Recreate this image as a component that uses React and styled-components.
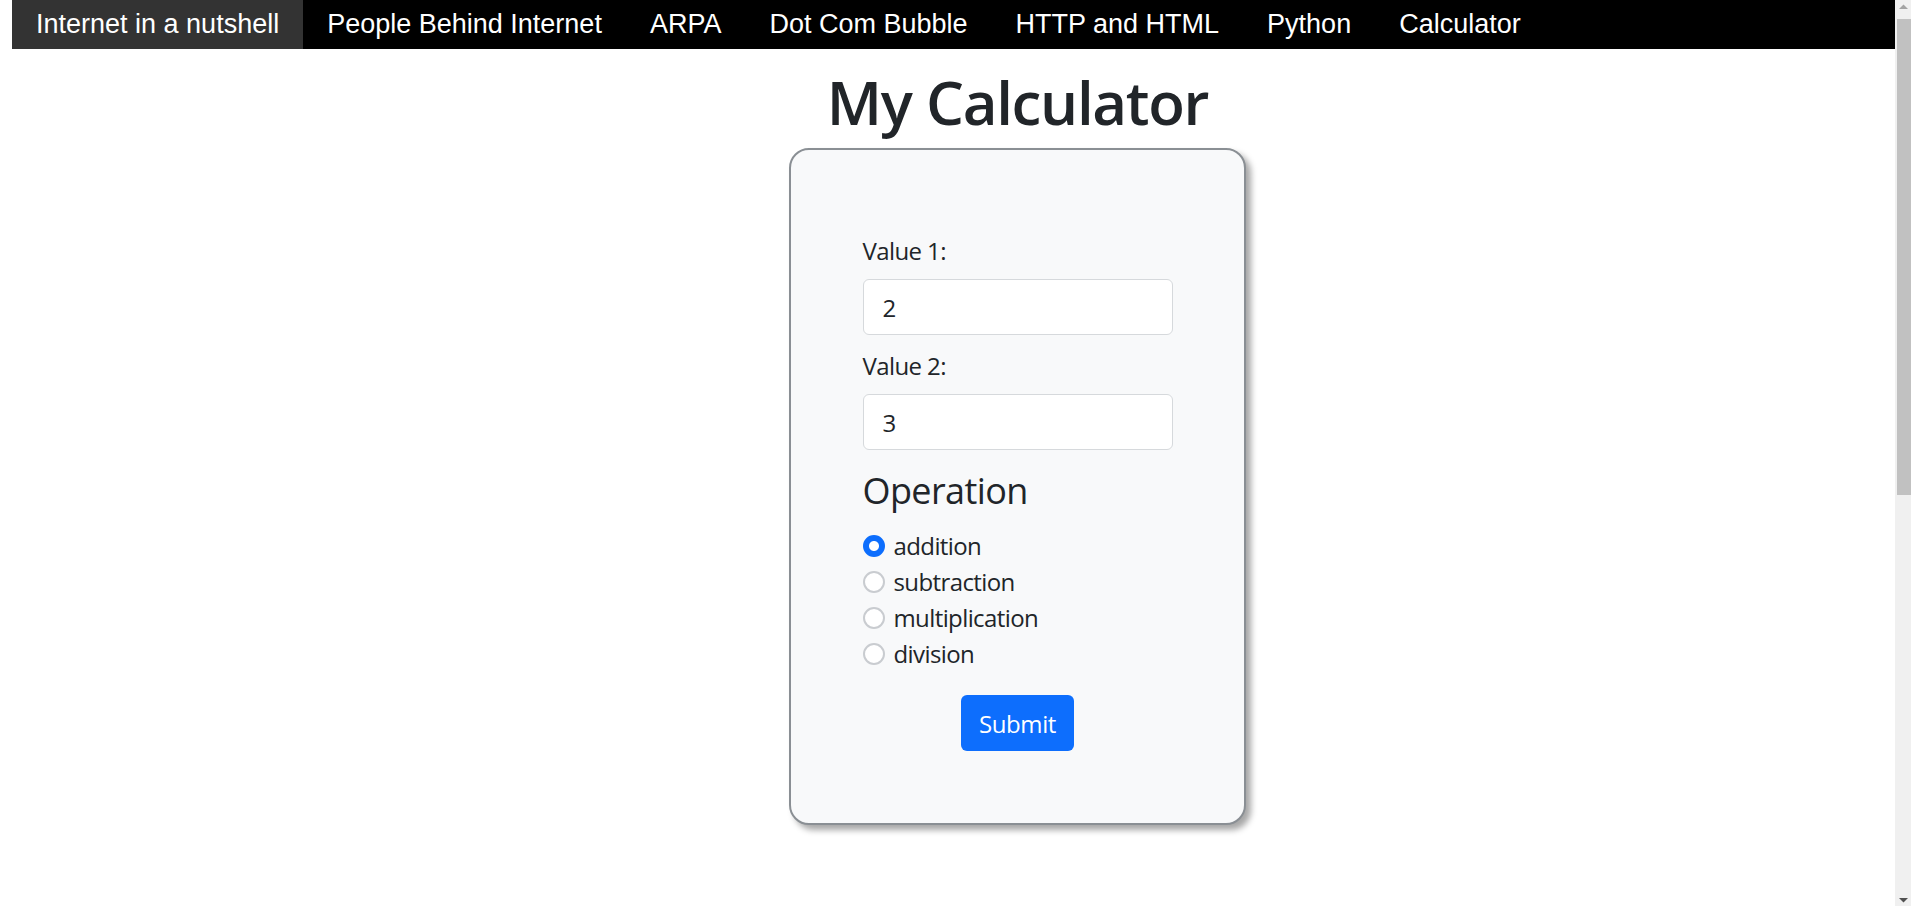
import React from 'react';
import styled, { createGlobalStyle } from 'styled-components';

const GlobalStyle = createGlobalStyle`
  body {
    margin: 0 16px 0 12px;
    background: #fff;
    color: #212529;
    font-family: "Open Sans", "Noto Sans", sans-serif;
    font-size: 24px;
    line-height: 1.5;
    letter-spacing: -0.6px;
  }
  * {
    box-sizing: border-box;
  }
`;

const links = [
  'Internet in a nutshell',
  'People Behind Internet',
  'ARPA',
  'Dot Com Bubble',
  'HTTP and HTML',
  'Python',
  'Calculator',
];

const operations = ['addition', 'subtraction', 'multiplication', 'division'];

const App = () => (
  <>
    <GlobalStyle />
    <NavBar>
      {links.map((name, i) => (
        <li key={name}>
          <NavLink href="#" $active={i === 0}>{name}</NavLink>
        </li>
      ))}
    </NavBar>

    <Page>
      <Title>My Calculator</Title>
      <Card>
        <Form onSubmit={e => e.preventDefault()}>
          <Label htmlFor="v1">Value 1:</Label>
          <Input id="v1" type="text" defaultValue="2" />
          <Label htmlFor="v2">Value 2:</Label>
          <Input id="v2" type="text" defaultValue="3" $last />

          <Heading>Operation</Heading>
          {operations.map((op, i) => (
            <RadioRow key={op}>
              <Radio type="radio" name="operation" value={op} defaultChecked={i === 0} />
              {op}
            </RadioRow>
          ))}

          <SubmitButton type="submit">Submit</SubmitButton>
        </Form>
      </Card>
    </Page>

    {/* window scrollbar, drawn since the headless page hides its own */}
    <Scrollbar>
      <Arrow viewBox="0 0 16 17">
        <path d="M4 9 L8.5 4.5 L13 9 Z" fill="#a3a3a3" />
      </Arrow>
      <Thumb />
      <Spacer />
      <Arrow viewBox="0 0 16 17">
        <path d="M4 9 L8.5 13.5 L13 9 Z" fill="#505050" />
      </Arrow>
    </Scrollbar>
  </>
);

//styled components

const NavBar = styled.ul`
  display: flex;
  margin: 0;
  padding: 0;
  list-style: none;
  height: 49px;
  background: #000;
  letter-spacing: normal;
`;

const NavLink = styled.a`
  display: flex;
  align-items: center;
  height: 49px;
  padding: 0 24px;
  color: #fff;
  text-decoration: none;
  font-family: "Liberation Sans", Arial, sans-serif;
  font-size: 27px;
  background: ${p => (p.$active ? '#333' : 'transparent')};
`;

const Page = styled.main`
  display: flex;
  flex-direction: column;
  align-items: center;
  padding-left: 128px;
  min-height: 1601px;
`;

const Title = styled.h1`
  margin: 17px 0 10px;
  font-size: 60px;
  font-weight: 600;
  letter-spacing: -1.3px;
  line-height: 1.2;
`;

const Card = styled.div`
  width: 457px;
  padding: 83px 0 72px;
  display: flex;
  justify-content: center;
  background: #f8f9fa;
  border: 2px solid #8a8f94;
  border-radius: 20px;
  box-shadow: 5px 5px 6px rgba(0, 0, 0, 0.35);
`;

const Form = styled.form`
  width: 310px;
  display: flex;
  flex-direction: column;
`;

const Label = styled.label`
  display: block;
  line-height: 36px;
  margin-bottom: 10px;
`;

const Input = styled.input`
  height: 56px;
  padding: 0 19px;
  margin: 0 0 ${p => (p.$last ? '19px' : '13px')};
  border: 1px solid #d6d9dc;
  border-radius: 6px;
  background: #fff;
  color: #212529;
  font-family: inherit;
  font-size: 24px;
  outline: none;
`;

const Heading = styled.h4`
  margin: 0 0 16px;
  font-size: 36px;
  font-weight: 400;
  letter-spacing: -0.6px;
  line-height: 1.2;
`;

const RadioRow = styled.label`
  display: flex;
  align-items: center;
  gap: 9px;
  height: 36px;
`;

const Radio = styled.input`
  appearance: none;
  width: 22px;
  height: 22px;
  margin: 0;
  border-radius: 50%;
  border: 2px solid #c9ccd0;
  background: #fff;

  &:checked {
    border-color: #0d6efd;
    background: radial-gradient(circle, #fff 0 4.5px, #0d6efd 5.5px);
  }
`;

const SubmitButton = styled.button`
  align-self: center;
  margin-top: 23px;
  height: 56px;
  padding: 0 18px;
  border: none;
  border-radius: 6px;
  background: #0d6efd;
  color: #fff;
  font-family: inherit;
  font-size: 24px;
  letter-spacing: -0.4px;
`;

const Scrollbar = styled.div`
  position: fixed;
  top: 0;
  right: 0;
  width: 16px;
  height: 100vh;
  display: flex;
  flex-direction: column;
  background: #f0f0f0;
`;

const Arrow = styled.svg`
  width: 16px;
  height: 17px;
  flex-shrink: 0;
`;

const Thumb = styled.div`
  height: 476px;
  margin: 2px 0 0 2px;
  background: #c1c1c1;
`;

const Spacer = styled.div`
  flex: 1;
`;

export default App;
